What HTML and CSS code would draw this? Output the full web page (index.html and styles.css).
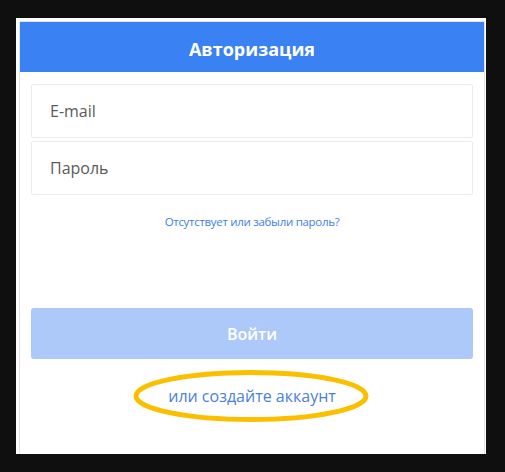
FILE: index.html
```html
<!DOCTYPE html>
<html lang="ru">
<head>
<meta charset="utf-8">
<title>Авторизация</title>
<link rel="stylesheet" href="styles.css">
</head>
<body>
<div class="frame">
  <div class="card">
    <div class="card-header">Авторизация</div>
    <form class="card-body">
      <div class="fields">
        <input class="field" type="email" placeholder="E-mail">
        <input class="field" type="password" placeholder="Пароль">
      </div>
      <a class="forgot" href="#">Отсутствует или забыли пароль?</a>
      <button class="submit" type="button" disabled>Войти</button>
      <div class="register">
        <a class="register-link" href="#">или создайте аккаунт</a>
        <svg class="highlight" width="240" height="56" viewBox="0 0 240 56" aria-hidden="true">
          <ellipse cx="120" cy="28" rx="115" ry="23.5" fill="none" stroke="#fbbf00" stroke-width="5"/>
        </svg>
      </div>
    </form>
  </div>
</div>
</body>
</html>
```

FILE: styles.css
```css
html, body {
  margin: 0;
  padding: 0;
}

body {
  background: #0f0f0f;
  padding: 18px 0 0 16px;
  height: 472px;
  box-sizing: border-box;
  font-family: "Open Sans", "Noto Sans", "Liberation Sans", sans-serif;
}

.frame {
  width: 470px;
  height: 436px;
  box-sizing: border-box;
  background: #ffffff;
  padding: 3px 1px 0 3px;
  display: flex;
}

.card {
  flex: 1;
  border: 1px solid #e4e4e4;
  border-bottom: none;
  display: flex;
  flex-direction: column;
}

.card-header {
  height: 50px;
  background: #3a81f4;
  color: #ffffff;
  font-weight: 700;
  font-size: 18px;
  display: flex;
  align-items: center;
  justify-content: center;
  padding-top: 4px;
  box-sizing: border-box;
}

.card-body {
  margin: 0;
  padding: 12px 11px 0 11px;
  display: flex;
  flex-direction: column;
  align-items: stretch;
}

.fields {
  display: flex;
  flex-direction: column;
  gap: 3px;
}

.field {
  height: 54px;
  box-sizing: border-box;
  border: 1px solid #ececec;
  border-radius: 2px;
  padding: 0 18px;
  font-family: inherit;
  font-size: 16px;
  color: #555555;
  background: #ffffff;
  outline: none;
}

.field::placeholder {
  color: #5a5a5a;
  opacity: 1;
}

.forgot {
  align-self: center;
  margin-top: 19px;
  font-size: 11.5px;
  letter-spacing: -0.3px;
  color: #3d7fe6;
  text-decoration: none;
  line-height: 16px;
}

.submit {
  margin-top: 78px;
  height: 51px;
  border: none;
  border-radius: 3px;
  background: #acc9f9;
  color: #ffffff;
  font-family: inherit;
  font-weight: 600;
  font-size: 16px;
  padding: 0;
}

.register {
  position: relative;
  align-self: center;
  margin-top: 26px;
  height: 22px;
  display: flex;
  align-items: center;
}

.register-link {
  font-size: 16px;
  color: #4a80e0;
  text-decoration: none;
  line-height: 22px;
}

.highlight {
  position: absolute;
  left: 50%;
  top: 50%;
  transform: translate(-50%, -50%);
  margin-left: -1px;
  pointer-events: none;
}
```
